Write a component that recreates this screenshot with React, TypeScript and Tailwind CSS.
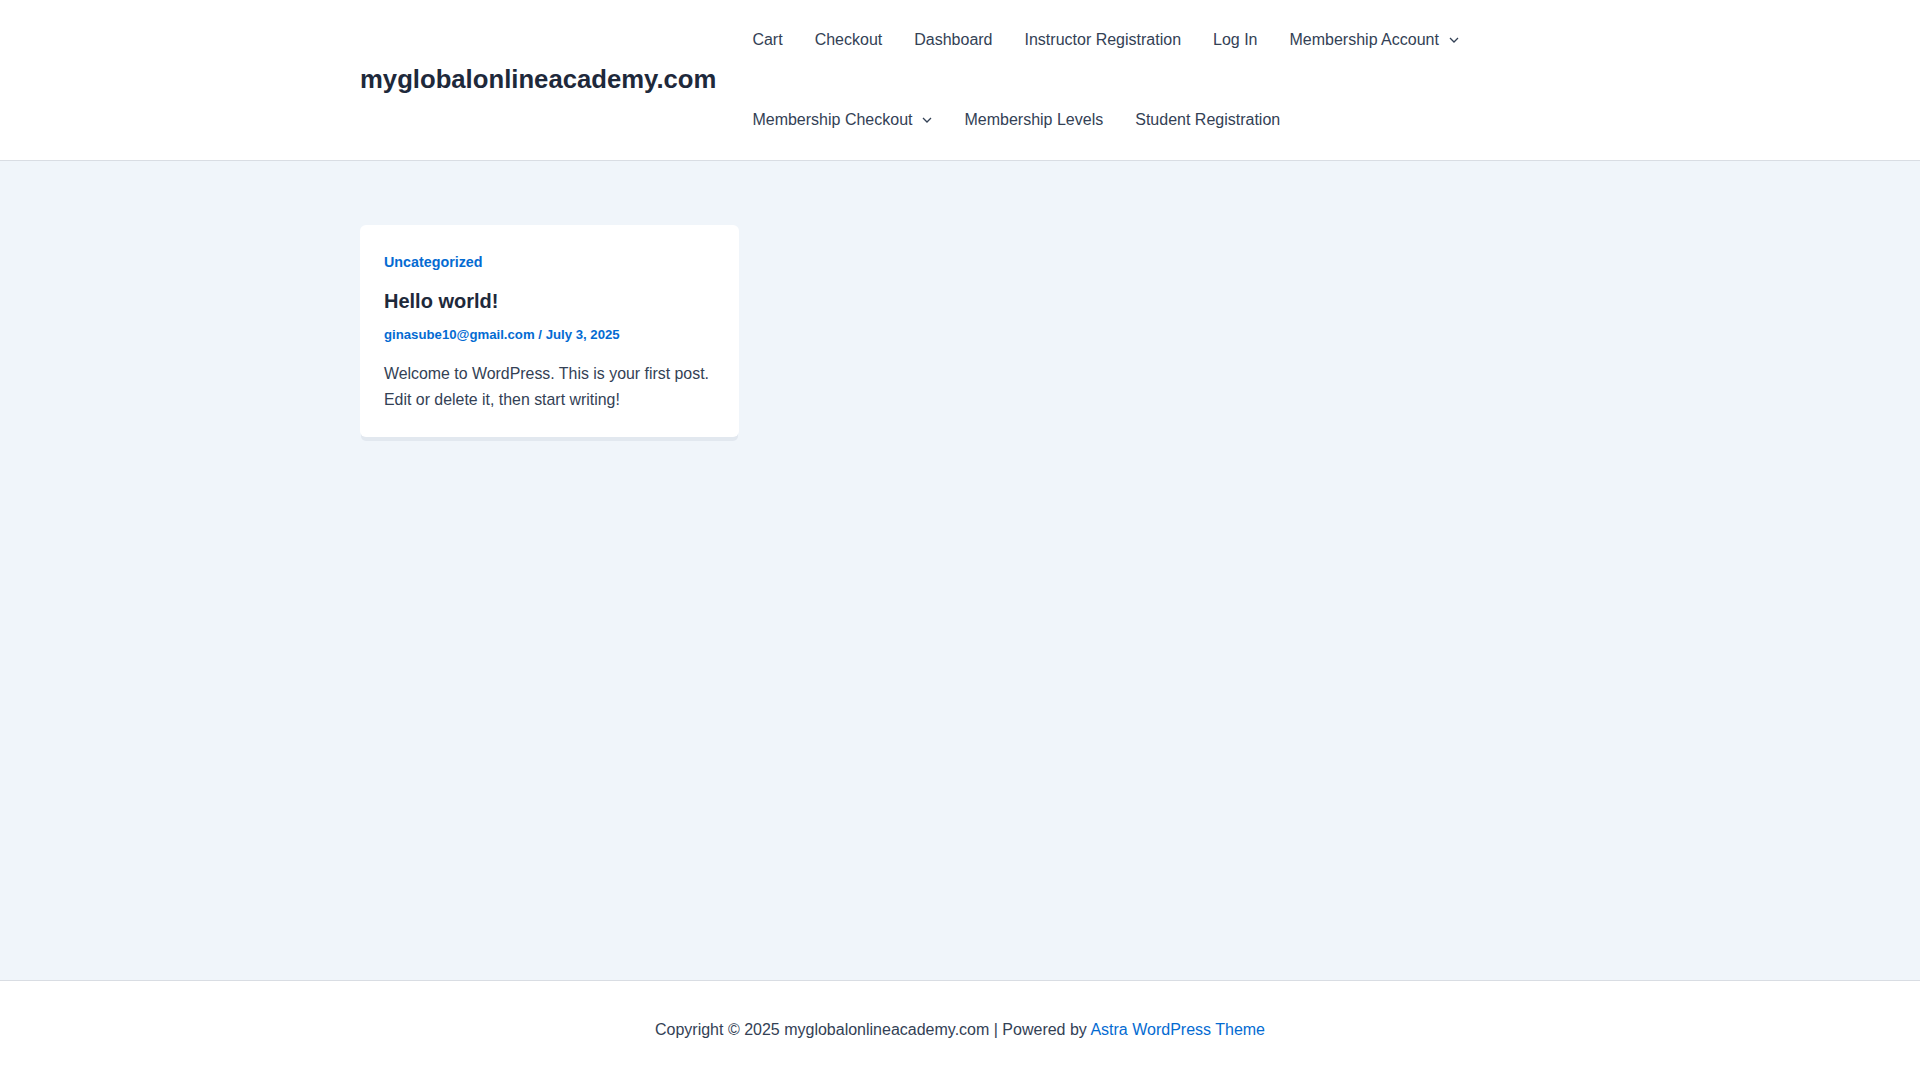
const menuTop = [
  { label: "Cart" },
  { label: "Checkout" },
  { label: "Dashboard" },
  { label: "Instructor Registration" },
  { label: "Log In" },
  { label: "Membership Account", sub: true },
  { label: "Membership Checkout", sub: true },
  { label: "Membership Levels" },
  { label: "Student Registration" },
];

const Chevron = () => (
  <svg
    className="ml-[10px] h-[6px] w-[10px] text-[#334155]"
    viewBox="0 0 10 6"
    fill="none"
    stroke="currentColor"
    strokeWidth="1.3"
  >
    <path d="M1 1l4 4 4-4" />
  </svg>
);

const Header = () => {
  return (
    <header className="border-b border-[#d9dde3] bg-white">
      <div className="mx-auto flex w-[1200px] items-center">
        <a href="#" className="shrink-0 text-[25.7px] font-bold leading-none text-[#1e293b]">
          myglobalonlineacademy.com
        </a>
        <nav className="ml-[20px] flex-1">
          <ul className="flex flex-wrap">
            {menuTop.map((item) => (
              <li key={item.label}>
                <a
                  href="#"
                  className="flex h-[80px] items-center px-4 text-[16px] text-[#334155] hover:text-[#046bd2]"
                >
                  {item.label}
                  {item.sub && <Chevron />}
                </a>
              </li>
            ))}
          </ul>
        </nav>
      </div>
    </header>
  );
};

const PostCard = () => {
  return (
    <article className="w-[379px] rounded-md bg-white px-6 pb-6 pt-[27px] shadow-[0_5px_0_-1px_#e2e8ef]">
      <a href="#" className="block text-[14.3px] font-bold leading-5 text-[#046bd2]">
        Uncategorized
      </a>
      <h2 className="mt-[15px] text-[20px] font-bold leading-7 text-[#1e293b]">
        <a href="#">Hello world!</a>
      </h2>
      <div className="mt-[10px] text-[13.2px] font-bold leading-5 text-[#046bd2]">
        <a href="#">ginasube10@gmail.com</a> / <a href="#">July 3, 2025</a>
      </div>
      <p className="mt-4 text-[15.9px] leading-[26px] text-[#334155]">
        Welcome to WordPress. This is your first post. Edit or delete it, then start writing!
      </p>
    </article>
  );
};

export default function App() {
  return (
    <div
      className="flex min-h-screen flex-col bg-[#f0f5fa]"
      style={{ fontFamily: '"Liberation Sans", Arial, sans-serif' }}
    >
      <Header />
      <main className="flex-1">
        <div className="mx-auto w-[1200px] pt-16">
          <PostCard />
        </div>
      </main>
      <footer className="flex h-[100px] items-center justify-center border-t border-[#d9dde3] bg-white pb-[2px] text-[16px] text-[#334155]">
        <p>
          Copyright © 2025 myglobalonlineacademy.com | Powered by{" "}
          <a href="#" className="text-[#046bd2]">
            Astra WordPress Theme
          </a>
        </p>
      </footer>
    </div>
  );
}
